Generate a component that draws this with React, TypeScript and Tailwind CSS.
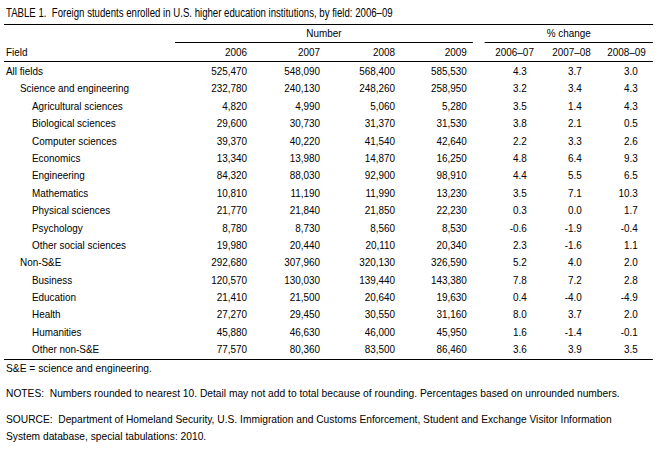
const rows: [string, number, string[], string[]][] = [
  ['All fields', 0, ['525,470', '548,090', '568,400', '585,530'], ['4.3', '3.7', '3.0']],
  ['Science and engineering', 1, ['232,780', '240,130', '248,260', '258,950'], ['3.2', '3.4', '4.3']],
  ['Agricultural sciences', 2, ['4,820', '4,990', '5,060', '5,280'], ['3.5', '1.4', '4.3']],
  ['Biological sciences', 2, ['29,600', '30,730', '31,370', '31,530'], ['3.8', '2.1', '0.5']],
  ['Computer sciences', 2, ['39,370', '40,220', '41,540', '42,640'], ['2.2', '3.3', '2.6']],
  ['Economics', 2, ['13,340', '13,980', '14,870', '16,250'], ['4.8', '6.4', '9.3']],
  ['Engineering', 2, ['84,320', '88,030', '92,900', '98,910'], ['4.4', '5.5', '6.5']],
  ['Mathematics', 2, ['10,810', '11,190', '11,990', '13,230'], ['3.5', '7.1', '10.3']],
  ['Physical sciences', 2, ['21,770', '21,840', '21,850', '22,230'], ['0.3', '0.0', '1.7']],
  ['Psychology', 2, ['8,780', '8,730', '8,560', '8,530'], ['-0.6', '-1.9', '-0.4']],
  ['Other social sciences', 2, ['19,980', '20,440', '20,110', '20,340'], ['2.3', '-1.6', '1.1']],
  ['Non-S&E', 1, ['292,680', '307,960', '320,130', '326,590'], ['5.2', '4.0', '2.0']],
  ['Business', 2, ['120,570', '130,030', '139,440', '143,380'], ['7.8', '7.2', '2.8']],
  ['Education', 2, ['21,410', '21,500', '20,640', '19,630'], ['0.4', '-4.0', '-4.9']],
  ['Health', 2, ['27,270', '29,450', '30,550', '31,160'], ['8.0', '3.7', '2.0']],
  ['Humanities', 2, ['45,880', '46,630', '46,000', '45,950'], ['1.6', '-1.4', '-0.1']],
  ['Other non-S&E', 2, ['77,570', '80,360', '83,500', '86,460'], ['3.6', '3.9', '3.5']],
]

// The print uses Arial Narrow, which isn't installed: text is set in
// Liberation Sans and squeezed horizontally (widths below are pre-squeeze).
const numCols = ['w-[82.2px] pr-[2.2px]', 'w-[82.2px] pr-[3.3px]', 'w-[83.3px] pr-[3.3px]', 'w-[83.3px] pr-[6.7px]']
const pctHead = ['w-[58.9px] pr-[4.4px]', 'w-[63.3px] pr-[4.4px]', 'w-[64.4px] pr-[7.8px]']
const pctVal = ['w-[58.9px] pr-[12.2px]', 'w-[63.3px] pr-[14.4px]', 'w-[64.4px] pr-[16.7px]']
const indent = ['pl-[2.2px]', 'pl-[17.8px]', 'pl-[31.1px]']

export default function App() {
  return (
    <div className="w-[659px] h-[451px] overflow-hidden bg-white text-black font-['Liberation_Sans',Arial,sans-serif]">
      {/* Title */}
      <div className="ml-[4px] w-[843px] h-[25px] origin-left scale-x-[0.77] border-b border-black pt-[5px] pl-[2.6px] text-[12.5px] leading-[16px] whitespace-nowrap">
        TABLE 1.&nbsp; Foreign students enrolled in U.S. higher education institutions, by field: 2006–09
      </div>

      <div className="ml-[4px] w-[721px] origin-left scale-x-[0.9] text-[11px]">
        {/* Column headers */}
        <div className="flex h-[18px]">
          <div className="w-[190px]" />
          <div className="w-[331px] border-b border-black text-center leading-[17px]">Number</div>
          <div className="w-[13.3px]" />
          <div className="w-[186.6px] border-b border-black text-center leading-[17px]">% change</div>
        </div>
        <div className="flex h-[19px] border-b border-black leading-[18px]">
          <div className="w-[190px] pl-[2.2px]">Field</div>
          {['2006', '2007', '2008', '2009'].map((y, i) => (
            <div key={y} className={`${numCols[i]} text-right`}>{y}</div>
          ))}
          <div className="w-[13.3px]" />
          {['2006–07', '2007–08', '2008–09'].map((y, i) => (
            <div key={y} className={`${pctHead[i]} text-right`}>{y}</div>
          ))}
        </div>

        {/* Body */}
        <div className="border-b border-black pt-[1px]">
          {rows.map(([name, level, nums, pcts]) => (
            <div key={name} className="flex h-[17.4px] leading-[17.4px] whitespace-nowrap">
              <div className={`w-[190px] ${indent[level]}`}>{name}</div>
              {nums.map((n, i) => (
                <div key={i} className={`${numCols[i]} text-right`}>{n}</div>
              ))}
              <div className="w-[13.3px]" />
              {pcts.map((p, i) => (
                <div key={i} className={`${pctVal[i]} text-right`}>{p}</div>
              ))}
            </div>
          ))}
        </div>
      </div>

      {/* Footnotes */}
      <div className="ml-[6px] w-[700px] origin-left scale-x-[0.93] pt-[1px] text-[11px] leading-[14px]">
        <p>S&amp;E = science and engineering.</p>
        <p className="mt-[11px] whitespace-nowrap">
          NOTES:&nbsp; Numbers rounded to nearest 10. Detail may not add to total because of rounding. Percentages based on unrounded numbers.
        </p>
        <p className="mt-[11px] w-[682px] leading-[17px]">
          SOURCE:&nbsp; Department of Homeland Security, U.S. Immigration and Customs Enforcement, Student and Exchange Visitor Information System database, special tabulations: 2010.
        </p>
      </div>
    </div>
  )
}
